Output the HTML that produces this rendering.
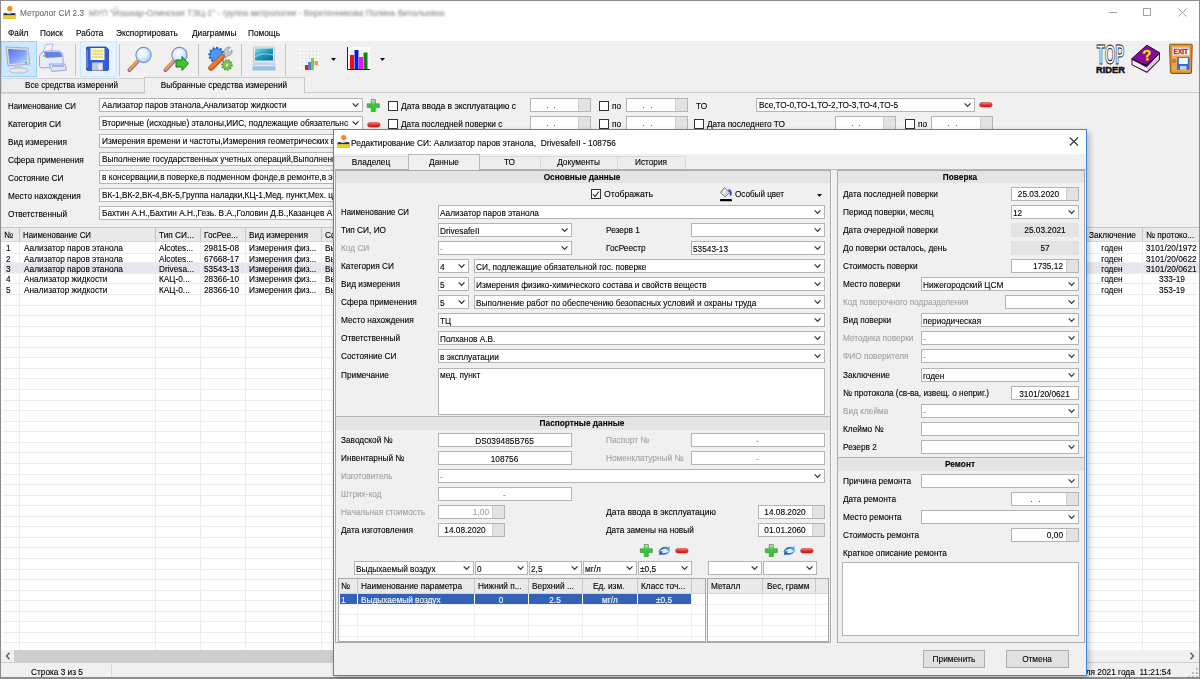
<!DOCTYPE html>
<html><head><meta charset="utf-8"><style>
html,body{margin:0;padding:0;}
body{width:1200px;height:679px;overflow:hidden;position:relative;background:#f0f0f0;font-family:"Liberation Sans",sans-serif;font-size:9px;color:#000;}
.a{position:absolute;}
.t{height:12px;line-height:12px;white-space:nowrap;-webkit-text-stroke-width:0.12px;filter:grayscale(1);}
svg{overflow:visible;}
</style></head><body>
<div class="a" style="left:0px;top:0px;width:1200px;height:41px;background:#fff;"></div>
<svg class="a" style="left:2px;top:4.5px" width="15" height="14" viewBox="0 0 15 14"><circle cx="7.8" cy="3.6" r="2.7" fill="#f0901a"/><path d="M4.5 9 Q5 5.8 7.8 6 Q10.6 5.8 11.2 9z" fill="#dfe4f4"/><path d="M1.5 8.6 L4 8 L6 9 L9 8.6 L11 8 L13.5 8.6 L13.5 10.2 L1.5 10.2z" fill="#1e2a58"/><rect x="1.6" y="10.2" width="12" height="3.4" fill="#f0d020" stroke="#c8a010" stroke-width="0.5"/></svg>
<div class="a t" style="top:6.80px;left:20px;transform-origin:0 50%;transform:scaleX(0.909);color:#707070;font-size:9px;">Метролог СИ 2.3</div>
<div class="a t" style="top:6.80px;left:89px;transform-origin:0 50%;transform:scaleX(0.92);color:#8a8a8a;font-size:9.2px;filter:blur(1.1px);">МУП "Йошкар-Олинская ТЭЦ-1" - группа метрологии - Веретенникова Полина Витальевна</div>
<div class="a" style="left:1109px;top:12px;width:8px;height:1px;background:#a0a0a0;"></div>
<div class="a" style="left:1143px;top:8px;width:8px;height:8px;box-sizing:border-box;border:1px solid #a0a0a0;"></div>
<svg class="a" style="left:1178px;top:8px" width="9" height="9" viewBox="0 0 9 9"><path d="M0.5 0.5 L8.5 8.5 M8.5 0.5 L0.5 8.5" stroke="#a0a0a0" stroke-width="1"/></svg>
<div class="a t" style="top:26.80px;left:8px;transform-origin:0 50%;transform:scaleX(0.92);">Файл</div>
<div class="a t" style="top:26.80px;left:40px;transform-origin:0 50%;transform:scaleX(0.92);">Поиск</div>
<div class="a t" style="top:26.80px;left:76px;transform-origin:0 50%;transform:scaleX(0.92);">Работа</div>
<div class="a t" style="top:26.80px;left:116px;transform-origin:0 50%;transform:scaleX(0.92);">Экспортировать</div>
<div class="a t" style="top:26.80px;left:192px;transform-origin:0 50%;transform:scaleX(0.92);">Диаграммы</div>
<div class="a t" style="top:26.80px;left:248px;transform-origin:0 50%;transform:scaleX(0.92);">Помощь</div>
<div class="a" style="left:1px;top:41px;width:36px;height:36px;background:#cce8ff;box-sizing:border-box;border:1px solid #99d1ff;"></div>
<div class="a" style="left:80px;top:41px;width:37px;height:36px;background:#e5f3ff;box-sizing:border-box;border:1px solid #cce8ff;"></div>
<div class="a" style="left:75px;top:44px;width:1px;height:32px;background:#c4c4c4;"></div>
<div class="a" style="left:119px;top:44px;width:1px;height:32px;background:#c4c4c4;"></div>
<div class="a" style="left:198px;top:44px;width:1px;height:32px;background:#c4c4c4;"></div>
<div class="a" style="left:241px;top:44px;width:1px;height:32px;background:#c4c4c4;"></div>
<div class="a" style="left:285px;top:44px;width:1px;height:32px;background:#c4c4c4;"></div>
<svg class="a" style="left:4px;top:45px" width="28" height="29" viewBox="0 0 28 29"><defs><linearGradient id="scr" x1="0" y1="0" x2="1" y2="1"><stop offset="0" stop-color="#5a6ee8"/><stop offset="0.6" stop-color="#8aa8f8"/><stop offset="1" stop-color="#c8e4ff"/></linearGradient></defs>
<path d="M2 2 L24 3 L26 19 L4 21z" fill="#d8dce8" stroke="#9aa0b4" stroke-width="0.8"/>
<path d="M4 4 L22.5 5 L24 17.5 L5.5 19z" fill="url(#scr)"/>
<rect x="21" y="17" width="2" height="1.5" fill="#3c3"/>
<path d="M11 21 L17 20.5 L18 24 L10 24.5z" fill="#c8ccd8"/>
<ellipse cx="14.5" cy="25.5" rx="9.5" ry="2.6" fill="#e4e6ee" stroke="#a8acbc" stroke-width="0.7"/></svg>
<svg class="a" style="left:38px;top:43px" width="30" height="31" viewBox="0 0 30 31"><path d="M5 9 L8 1.5 L15 1 L13 9z" fill="#f4f6ff" stroke="#98a0c8" stroke-width="0.7"/>
<path d="M1.5 14 Q2 8 10 8 L21 8 Q25 9 25 14 L25 24 L3 25 Q1.5 24 1.5 22z" fill="#e8ecff" stroke="#8890c0" stroke-width="0.8"/>
<path d="M6 9 L21 9 Q24 10 24 14 L8 15z" fill="#5f86e8"/>
<path d="M11 21 L27 21 L28.5 27 L14 28.5z" fill="#dfe6ff" stroke="#8a94c8" stroke-width="0.8"/>
<path d="M14 23 L26 23" stroke="#7b8ed8" stroke-width="1.2"/>
<circle cx="6" cy="13" r="0.9" fill="#4c4"/><circle cx="8.5" cy="13" r="0.9" fill="#e44"/></svg>
<svg class="a" style="left:85px;top:46px" width="25" height="26" viewBox="0 0 25 26"><path d="M1.5 2 Q1.5 1 2.5 1 L21 1 L23.5 3.5 L23.5 23 Q23.5 24.5 22 24.5 L3 24.5 Q1.5 24.5 1.5 23z" fill="#2f5fe0" stroke="#1e3ea8" stroke-width="0.8"/>
<rect x="5.5" y="2" width="14" height="12" fill="#fff7b8"/>
<path d="M7 5h11M7 8h11M7 11h11" stroke="#c9b870" stroke-width="0.8"/>
<rect x="7" y="16.5" width="11" height="8" fill="#c6cad8"/><rect x="13.5" y="17.5" width="3" height="6" fill="#eef0f6"/>
<path d="M2 4 L2 22" stroke="#7fa0ff" stroke-width="1"/></svg>
<svg class="a" style="left:127px;top:46px" width="27" height="27" viewBox="0 0 27 27"><defs><radialGradient id="lens" cx="0.4" cy="0.35" r="0.7"><stop offset="0" stop-color="#ffffff"/><stop offset="0.5" stop-color="#d8f0ff"/><stop offset="1" stop-color="#8cc8f0"/></radialGradient></defs>
<path d="M2.5 24 L10.5 15.5" stroke="#7a5a9a" stroke-width="4" stroke-linecap="round"/>
<path d="M2.5 23.5 L10.5 15" stroke="#f0a040" stroke-width="2.6" stroke-linecap="round"/>
<circle cx="16.5" cy="9" r="7.6" fill="url(#lens)" stroke="#8a84c8" stroke-width="1.1"/></svg>
<svg class="a" style="left:163px;top:46px" width="27" height="27" viewBox="0 0 27 27"><defs><radialGradient id="lens" cx="0.4" cy="0.35" r="0.7"><stop offset="0" stop-color="#ffffff"/><stop offset="0.5" stop-color="#d8f0ff"/><stop offset="1" stop-color="#8cc8f0"/></radialGradient></defs>
<path d="M2.5 24 L10.5 15.5" stroke="#7a5a9a" stroke-width="4" stroke-linecap="round"/>
<path d="M2.5 23.5 L10.5 15" stroke="#f0a040" stroke-width="2.6" stroke-linecap="round"/>
<circle cx="16.5" cy="9" r="7.6" fill="url(#lens)" stroke="#8a84c8" stroke-width="1.1"/><path d="M13 14 L19 14 L19 10.5 L25.5 17.5 L19 24.5 L19 21 L13 21z" fill="#40c030" stroke="#107a10" stroke-width="1"/></svg>
<svg class="a" style="left:207px;top:45px" width="27" height="27" viewBox="0 0 27 27"><circle cx="9.5" cy="10" r="7" fill="#3c8ee8" stroke="#2266c8" stroke-width="2.4" stroke-dasharray="2 1.6"/>
<circle cx="9.5" cy="10" r="5.5" fill="#4a9af0"/>
<path d="M17 6 Q19 1 23.5 2.5 L20.5 5.5 L22 7.5 L25 5 Q26 9.5 21 11 L18 13z" fill="#c8c8d0" stroke="#888" stroke-width="0.7"/>
<circle cx="20" cy="20" r="4.8" fill="#7cc050" stroke="#5a9a30" stroke-width="2" stroke-dasharray="1.6 1.3"/>
<circle cx="20" cy="20" r="1.5" fill="#d8f0c8"/>
<path d="M4 23 L15 12" stroke="#b04a10" stroke-width="5.4" stroke-linecap="round"/>
<path d="M4 22.5 L15 11.5" stroke="#f07828" stroke-width="3.8" stroke-linecap="round"/></svg>
<svg class="a" style="left:252px;top:46px" width="25" height="26" viewBox="0 0 25 26"><defs><linearGradient id="tl" x1="0" y1="0" x2="1" y2="1"><stop offset="0" stop-color="#80e0f0"/><stop offset="0.5" stop-color="#1a9ab8"/><stop offset="1" stop-color="#0a6a90"/></linearGradient></defs>
<rect x="1.5" y="1" width="21" height="16" rx="1" fill="#e8eaf4" stroke="#b8bcd4" stroke-width="0.8"/>
<rect x="3" y="2.5" width="18" height="12" fill="url(#tl)"/>
<path d="M3 11 Q10 6 21 9" stroke="#b8f0ff" stroke-width="1" fill="none" opacity="0.7"/>
<rect x="1" y="18" width="22" height="2.5" fill="#d4e4f4" stroke="#9ab0cc" stroke-width="0.5"/>
<rect x="1" y="21.5" width="22" height="2.5" fill="#8ad0e8" stroke="#6aa0c0" stroke-width="0.5"/></svg>
<svg class="a" style="left:298px;top:47px" width="23" height="25" viewBox="0 0 23 25"><rect x="1" y="1" width="20" height="22" fill="#f8f8f8"/>
<path d="M1 4.5h20M1 8h20M1 11.5h20M1 15h20M1 18.5h20M4.5 1v22M8 1v22M11.5 1v22M15 1v22M18.5 1v22" stroke="#dedede" stroke-width="0.6"/>
<rect x="7" y="18" width="3" height="5" fill="#e02020"/><rect x="10" y="15" width="3" height="8" fill="#5080d0"/>
<rect x="13" y="11" width="3" height="12" fill="#70d040"/><rect x="16.5" y="14" width="3.5" height="4" fill="#f0a040"/></svg>
<svg class="a" style="left:331px;top:58px" width="5" height="3" viewBox="0 0 5 3"><path d="M0 0 L5 0 L2.5 3z" fill="#111"/></svg>
<svg class="a" style="left:345px;top:46px" width="26" height="26" viewBox="0 0 26 26"><rect x="2" y="1" width="23" height="22" fill="#fff"/>
<path d="M2 5h23M2 9h23M2 13h23M2 17h23M7 1v22M12 1v22M17 1v22M22 1v22" stroke="#e4e4e4" stroke-width="0.6"/>
<path d="M2.5 1 L2.5 23.5 L25 23.5" stroke="#222" stroke-width="1" fill="none"/>
<rect x="5" y="9" width="4" height="14" fill="#f01010"/><rect x="9.5" y="4" width="4" height="19" fill="#1010f0"/>
<rect x="14" y="11" width="4" height="12" fill="#f010f0"/><rect x="18.5" y="6.5" width="4" height="16.5" fill="#108010"/></svg>
<svg class="a" style="left:380px;top:58px" width="5" height="3" viewBox="0 0 5 3"><path d="M0 0 L5 0 L2.5 3z" fill="#111"/></svg>
<svg class="a" style="left:1095px;top:43px" width="32" height="32" viewBox="0 0 32 32"><text x="1.8" y="21" font-family="Liberation Sans" font-weight="bold" font-size="27" fill="#fff" stroke="#111" stroke-width="1" textLength="27.5" lengthAdjust="spacingAndGlyphs">TOP</text>
<text x="1" y="29.6" font-family="Liberation Sans" font-weight="bold" font-size="9.4" fill="#111" stroke="#111" stroke-width="0.5" textLength="29" lengthAdjust="spacingAndGlyphs">RIDER</text></svg>
<svg class="a" style="left:1130px;top:44px" width="32" height="30" viewBox="0 0 32 30"><path d="M1.5 15 L1.5 21 L17 29 L30 16 L30 9z" fill="#3a0a48"/>
<path d="M2.5 16 L16.5 23.5 L29 10.5 L29 15.5 L16.8 27.5 L2.5 20.5z" fill="#f4f4f4"/>
<path d="M17 24 L29 12 L29 15.5 L16.8 27.5z" fill="#cfcfcf"/>
<path d="M1.5 15 L16.8 1.2 L30 9 L16.5 21z" fill="#8a0a9a" stroke="#2a0038" stroke-width="1"/>
<text x="17" y="16.5" text-anchor="middle" font-family="Liberation Sans" font-weight="bold" font-size="15" fill="#f8f000" stroke="#c8c000" stroke-width="0.3" transform="rotate(-8 16 11)">?</text></svg>
<svg class="a" style="left:1168px;top:43px" width="26" height="32" viewBox="0 0 26 32"><path d="M1.5 2.5 Q1.5 1.2 3 1.2 L23 1.2 Q24.5 1.2 24.2 2.5 L23.5 29 Q23.5 30.5 22 30.5 L4 30.5 Q2.5 30.5 2.5 29z" fill="#d89038" stroke="#905010" stroke-width="1"/>
<rect x="4" y="3" width="18" height="25.5" fill="#eaa84c"/>
<path d="M4.5 4.5 L20 4.5 L21.5 6 L21.5 12.5 L4.5 12.5z" fill="#e8f4ff" stroke="#a8c0d0" stroke-width="0.4"/>
<text x="12.8" y="11.3" text-anchor="middle" font-family="Liberation Sans" font-weight="bold" font-size="6.8" fill="#e01818" stroke="#e01818" stroke-width="0.35" textLength="14.5" lengthAdjust="spacingAndGlyphs">EXIT</text>
<rect x="9" y="14.3" width="12.5" height="12.5" fill="#2f6ee0"/><rect x="10.8" y="15" width="9" height="6" fill="#f4f8ff"/><rect x="12" y="23" width="6.5" height="3.8" fill="#c8d0e0"/>
<circle cx="6" cy="18" r="1.8" fill="#d08838" stroke="#8a5010" stroke-width="0.5"/></svg>
<div class="a" style="left:1px;top:78px;width:144px;height:16px;background:#ececec;box-sizing:border-box;border:1px solid #d4d4d4;"></div>
<div class="a" style="left:1px;top:92px;width:1198px;height:1px;background:#c9c9c9;"></div>
<div class="a" style="left:144px;top:77px;width:161px;height:16px;background:#f0f0f0;box-sizing:border-box;border:1px solid #c9c9c9;border-bottom:none;"></div>
<div class="a t" style="top:78.90px;left:0.00px;width:143px;text-align:center;transform:scaleX(0.896);">Все средства измерений</div>
<div class="a t" style="top:78.90px;left:144.00px;width:160px;text-align:center;transform:scaleX(0.92);">Выбранные средства измерений</div>
<div class="a t" style="top:99.80px;left:8px;transform-origin:0 50%;transform:scaleX(0.873);">Наименование СИ</div>
<div class="a" style="left:99px;top:98px;width:264px;height:14px;background:#fff;box-sizing:border-box;border:1px solid #b4b4b4;"></div>
<div class="a t" style="top:99.10px;left:102px;transform-origin:0 50%;transform:scaleX(0.92);width:267.4px;overflow:hidden;">Аализатор паров этанола,Анализатор жидкости</div>
<svg class="a" style="left:351px;top:98px" width="11" height="14"><path d="M1.7 5.40 L4.6 8.40 L7.5 5.40" fill="none" stroke="#333" stroke-width="1.25"/></svg>
<div class="a t" style="top:117.80px;left:8px;transform-origin:0 50%;transform:scaleX(0.92);">Категория СИ</div>
<div class="a" style="left:99px;top:116px;width:264px;height:14px;background:#fff;box-sizing:border-box;border:1px solid #b4b4b4;"></div>
<div class="a t" style="top:117.10px;left:102px;transform-origin:0 50%;transform:scaleX(0.92);width:267.4px;overflow:hidden;">Вторичные (исходные) эталоны,ИИС, подлежащие обязательной гос. поверке</div>
<svg class="a" style="left:351px;top:116px" width="11" height="14"><path d="M1.7 5.40 L4.6 8.40 L7.5 5.40" fill="none" stroke="#333" stroke-width="1.25"/></svg>
<div class="a t" style="top:135.80px;left:8px;transform-origin:0 50%;transform:scaleX(0.92);">Вид измерения</div>
<div class="a" style="left:99px;top:134px;width:264px;height:14px;background:#fff;box-sizing:border-box;border:1px solid #b4b4b4;"></div>
<div class="a t" style="top:135.10px;left:102px;transform-origin:0 50%;transform:scaleX(0.92);width:267.4px;overflow:hidden;">Измерения времени и частоты,Измерения геометрических величин</div>
<svg class="a" style="left:351px;top:134px" width="11" height="14"><path d="M1.7 5.40 L4.6 8.40 L7.5 5.40" fill="none" stroke="#333" stroke-width="1.25"/></svg>
<div class="a t" style="top:153.80px;left:8px;transform-origin:0 50%;transform:scaleX(0.92);">Сфера применения</div>
<div class="a" style="left:99px;top:152px;width:264px;height:14px;background:#fff;box-sizing:border-box;border:1px solid #b4b4b4;"></div>
<div class="a t" style="top:153.10px;left:102px;transform-origin:0 50%;transform:scaleX(0.92);width:267.4px;overflow:hidden;">Выполнение государственных учетных операций,Выполнение работ</div>
<svg class="a" style="left:351px;top:152px" width="11" height="14"><path d="M1.7 5.40 L4.6 8.40 L7.5 5.40" fill="none" stroke="#333" stroke-width="1.25"/></svg>
<div class="a t" style="top:171.80px;left:8px;transform-origin:0 50%;transform:scaleX(0.92);">Состояние СИ</div>
<div class="a" style="left:99px;top:170px;width:264px;height:14px;background:#fff;box-sizing:border-box;border:1px solid #b4b4b4;"></div>
<div class="a t" style="top:171.10px;left:102px;transform-origin:0 50%;transform:scaleX(0.92);width:267.4px;overflow:hidden;">в консервации,в поверке,в подменном фонде,в ремонте,в эксплуатации</div>
<svg class="a" style="left:351px;top:170px" width="11" height="14"><path d="M1.7 5.40 L4.6 8.40 L7.5 5.40" fill="none" stroke="#333" stroke-width="1.25"/></svg>
<div class="a t" style="top:189.80px;left:8px;transform-origin:0 50%;transform:scaleX(0.92);">Место нахождения</div>
<div class="a" style="left:99px;top:188px;width:264px;height:14px;background:#fff;box-sizing:border-box;border:1px solid #b4b4b4;"></div>
<div class="a t" style="top:189.10px;left:102px;transform-origin:0 50%;transform:scaleX(0.92);width:267.4px;overflow:hidden;">ВК-1,ВК-2,ВК-4,ВК-5,Группа наладки,КЦ-1,Мед. пункт,Мех. цех</div>
<svg class="a" style="left:351px;top:188px" width="11" height="14"><path d="M1.7 5.40 L4.6 8.40 L7.5 5.40" fill="none" stroke="#333" stroke-width="1.25"/></svg>
<div class="a t" style="top:207.80px;left:8px;transform-origin:0 50%;transform:scaleX(0.92);">Ответственный</div>
<div class="a" style="left:99px;top:206px;width:264px;height:14px;background:#fff;box-sizing:border-box;border:1px solid #b4b4b4;"></div>
<div class="a t" style="top:207.10px;left:102px;transform-origin:0 50%;transform:scaleX(0.92);width:267.4px;overflow:hidden;">Бахтин А.Н.,Бахтин А.Н.,Гезь. В.А.,Головин Д.В.,Казанцев А.А.</div>
<svg class="a" style="left:351px;top:206px" width="11" height="14"><path d="M1.7 5.40 L4.6 8.40 L7.5 5.40" fill="none" stroke="#333" stroke-width="1.25"/></svg>
<svg class="a" style="left:367px;top:99px" width="13" height="13" viewBox="0 0 13 13"><defs><linearGradient id="pg" x1="0" y1="0" x2="0" y2="1"><stop offset="0" stop-color="#d8ecd8"/><stop offset="0.45" stop-color="#40c040"/><stop offset="1" stop-color="#10e010"/></linearGradient></defs><path d="M4.3 0.5h4v4.3h4v3.8h-4v4h-4v-4h-4v-3.8h4z" fill="url(#pg)" stroke="#3a8a3a" stroke-width="0.7"/></svg>
<svg class="a" style="left:367px;top:122px" width="14" height="6" viewBox="0 0 14 6"><defs><linearGradient id="mg" x1="0" y1="0" x2="0" y2="1"><stop offset="0" stop-color="#e8a0a0"/><stop offset="0.5" stop-color="#e02a2a"/><stop offset="1" stop-color="#e81010"/></linearGradient></defs><rect x="0.6" y="0.6" width="12.5" height="4.4" rx="2.2" fill="url(#mg)" stroke="#c02020" stroke-width="0.6"/></svg>
<div class="a" style="left:388px;top:101px;width:10px;height:10px;background:#fff;box-sizing:border-box;border:1px solid #333;"></div>
<div class="a t" style="top:99.70px;left:401px;transform-origin:0 50%;transform:scaleX(0.941);">Дата ввода в эксплуатацию с</div>
<div class="a" style="left:530px;top:98px;width:61px;height:14px;background:#fff;box-sizing:border-box;border:1px solid #b4b4b4;"></div>
<div class="a" style="left:578px;top:99px;width:12px;height:12px;background:#e2e2e2;"></div>
<div class="a" style="left:578px;top:99px;width:1px;height:12px;background:#cfcfcf;"></div>
<div class="a" style="left:546.8px;top:107px;width:1.2px;height:1.2px;background:#606060"></div>
<div class="a" style="left:554.2px;top:107px;width:1.2px;height:1.2px;background:#606060"></div>
<div class="a" style="left:599px;top:101px;width:10px;height:10px;background:#fff;box-sizing:border-box;border:1px solid #333;"></div>
<div class="a t" style="top:99.70px;left:612px;transform-origin:0 50%;transform:scaleX(0.92);">по</div>
<div class="a" style="left:626px;top:98px;width:62px;height:14px;background:#fff;box-sizing:border-box;border:1px solid #b4b4b4;"></div>
<div class="a" style="left:675px;top:99px;width:12px;height:12px;background:#e2e2e2;"></div>
<div class="a" style="left:675px;top:99px;width:1px;height:12px;background:#cfcfcf;"></div>
<div class="a" style="left:643.2px;top:107px;width:1.2px;height:1.2px;background:#606060"></div>
<div class="a" style="left:650.8px;top:107px;width:1.2px;height:1.2px;background:#606060"></div>
<div class="a" style="left:388px;top:119px;width:10px;height:10px;background:#fff;box-sizing:border-box;border:1px solid #333;"></div>
<div class="a t" style="top:117.70px;left:401px;transform-origin:0 50%;transform:scaleX(0.92);">Дата последней поверки с</div>
<div class="a" style="left:530px;top:116px;width:61px;height:14px;background:#fff;box-sizing:border-box;border:1px solid #b4b4b4;"></div>
<div class="a" style="left:578px;top:117px;width:12px;height:12px;background:#e2e2e2;"></div>
<div class="a" style="left:578px;top:117px;width:1px;height:12px;background:#cfcfcf;"></div>
<div class="a" style="left:546.8px;top:125px;width:1.2px;height:1.2px;background:#606060"></div>
<div class="a" style="left:554.2px;top:125px;width:1.2px;height:1.2px;background:#606060"></div>
<div class="a" style="left:599px;top:119px;width:10px;height:10px;background:#fff;box-sizing:border-box;border:1px solid #333;"></div>
<div class="a t" style="top:117.70px;left:612px;transform-origin:0 50%;transform:scaleX(0.92);">по</div>
<div class="a" style="left:626px;top:116px;width:62px;height:14px;background:#fff;box-sizing:border-box;border:1px solid #b4b4b4;"></div>
<div class="a" style="left:675px;top:117px;width:12px;height:12px;background:#e2e2e2;"></div>
<div class="a" style="left:675px;top:117px;width:1px;height:12px;background:#cfcfcf;"></div>
<div class="a" style="left:643.2px;top:125px;width:1.2px;height:1.2px;background:#606060"></div>
<div class="a" style="left:650.8px;top:125px;width:1.2px;height:1.2px;background:#606060"></div>
<div class="a t" style="top:99.70px;left:696px;transform-origin:0 50%;transform:scaleX(0.92);">ТО</div>
<div class="a" style="left:756px;top:98px;width:219px;height:14px;background:#fff;box-sizing:border-box;border:1px solid #b4b4b4;"></div>
<div class="a t" style="top:99.10px;left:759px;transform-origin:0 50%;transform:scaleX(0.92);width:218.5px;overflow:hidden;">Все,ТО-0,ТО-1,ТО-2,ТО-3,ТО-4,ТО-5</div>
<svg class="a" style="left:963px;top:98px" width="11" height="14"><path d="M1.7 5.40 L4.6 8.40 L7.5 5.40" fill="none" stroke="#333" stroke-width="1.25"/></svg>
<svg class="a" style="left:979px;top:102px" width="14" height="6" viewBox="0 0 14 6"><defs><linearGradient id="mg" x1="0" y1="0" x2="0" y2="1"><stop offset="0" stop-color="#e8a0a0"/><stop offset="0.5" stop-color="#e02a2a"/><stop offset="1" stop-color="#e81010"/></linearGradient></defs><rect x="0.6" y="0.6" width="12.5" height="4.4" rx="2.2" fill="url(#mg)" stroke="#c02020" stroke-width="0.6"/></svg>
<div class="a" style="left:694px;top:119px;width:10px;height:10px;background:#fff;box-sizing:border-box;border:1px solid #333;"></div>
<div class="a t" style="top:117.70px;left:707px;transform-origin:0 50%;transform:scaleX(0.92);">Дата последнего ТО</div>
<div class="a" style="left:835px;top:116px;width:61px;height:14px;background:#fff;box-sizing:border-box;border:1px solid #b4b4b4;"></div>
<div class="a" style="left:883px;top:117px;width:12px;height:12px;background:#e2e2e2;"></div>
<div class="a" style="left:883px;top:117px;width:1px;height:12px;background:#cfcfcf;"></div>
<div class="a" style="left:851.8px;top:125px;width:1.2px;height:1.2px;background:#606060"></div>
<div class="a" style="left:859.2px;top:125px;width:1.2px;height:1.2px;background:#606060"></div>
<div class="a" style="left:905px;top:119px;width:10px;height:10px;background:#fff;box-sizing:border-box;border:1px solid #333;"></div>
<div class="a t" style="top:117.70px;left:918px;transform-origin:0 50%;transform:scaleX(0.92);">по</div>
<div class="a" style="left:931px;top:116px;width:62px;height:14px;background:#fff;box-sizing:border-box;border:1px solid #b4b4b4;"></div>
<div class="a" style="left:980px;top:117px;width:12px;height:12px;background:#e2e2e2;"></div>
<div class="a" style="left:980px;top:117px;width:1px;height:12px;background:#cfcfcf;"></div>
<div class="a" style="left:948.2px;top:125px;width:1.2px;height:1.2px;background:#606060"></div>
<div class="a" style="left:955.8px;top:125px;width:1.2px;height:1.2px;background:#606060"></div>
<div class="a" style="left:1px;top:227px;width:1198px;height:423px;background:#fff;"></div>
<div class="a" style="left:1px;top:227px;width:1198px;height:15px;background:#e9e9e9;"></div>
<div class="a" style="left:1px;top:227px;width:1198px;height:1px;background:#c8c8c8;"></div>
<div class="a" style="left:1px;top:241px;width:1198px;height:1px;background:#d8d8d8;"></div>
<div class="a" style="left:19px;top:228px;width:1px;height:13px;background:#c6c6c6;"></div>
<div class="a" style="left:155px;top:228px;width:1px;height:13px;background:#c6c6c6;"></div>
<div class="a" style="left:200px;top:228px;width:1px;height:13px;background:#c6c6c6;"></div>
<div class="a" style="left:245px;top:228px;width:1px;height:13px;background:#c6c6c6;"></div>
<div class="a" style="left:321px;top:228px;width:1px;height:13px;background:#c6c6c6;"></div>
<div class="a" style="left:1142px;top:228px;width:1px;height:13px;background:#c6c6c6;"></div>
<div class="a" style="left:4px;top:263px;width:1195px;height:11px;background:#e6e6ec"></div>
<div class="a" style="left:2px;top:253px;width:1196px;height:1px;background:#ededed"></div>
<div class="a" style="left:2px;top:262px;width:1196px;height:1px;background:#ededed"></div>
<div class="a" style="left:2px;top:273px;width:1196px;height:1px;background:#ededed"></div>
<div class="a" style="left:2px;top:283px;width:1196px;height:1px;background:#ededed"></div>
<div class="a" style="left:2px;top:294px;width:1196px;height:1px;background:#ededed"></div>
<div class="a" style="left:2px;top:305px;width:1196px;height:1px;background:#ededed"></div>
<div class="a" style="left:2px;top:315px;width:1196px;height:1px;background:#ededed"></div>
<div class="a" style="left:2px;top:326px;width:1196px;height:1px;background:#ededed"></div>
<div class="a" style="left:2px;top:336px;width:1196px;height:1px;background:#ededed"></div>
<div class="a" style="left:2px;top:347px;width:1196px;height:1px;background:#ededed"></div>
<div class="a" style="left:2px;top:357px;width:1196px;height:1px;background:#ededed"></div>
<div class="a" style="left:2px;top:368px;width:1196px;height:1px;background:#ededed"></div>
<div class="a" style="left:2px;top:378px;width:1196px;height:1px;background:#ededed"></div>
<div class="a" style="left:2px;top:389px;width:1196px;height:1px;background:#ededed"></div>
<div class="a" style="left:2px;top:400px;width:1196px;height:1px;background:#ededed"></div>
<div class="a" style="left:2px;top:410px;width:1196px;height:1px;background:#ededed"></div>
<div class="a" style="left:2px;top:421px;width:1196px;height:1px;background:#ededed"></div>
<div class="a" style="left:2px;top:431px;width:1196px;height:1px;background:#ededed"></div>
<div class="a" style="left:2px;top:442px;width:1196px;height:1px;background:#ededed"></div>
<div class="a" style="left:2px;top:452px;width:1196px;height:1px;background:#ededed"></div>
<div class="a" style="left:2px;top:463px;width:1196px;height:1px;background:#ededed"></div>
<div class="a" style="left:2px;top:474px;width:1196px;height:1px;background:#ededed"></div>
<div class="a" style="left:2px;top:484px;width:1196px;height:1px;background:#ededed"></div>
<div class="a" style="left:2px;top:495px;width:1196px;height:1px;background:#ededed"></div>
<div class="a" style="left:2px;top:505px;width:1196px;height:1px;background:#ededed"></div>
<div class="a" style="left:2px;top:516px;width:1196px;height:1px;background:#ededed"></div>
<div class="a" style="left:2px;top:526px;width:1196px;height:1px;background:#ededed"></div>
<div class="a" style="left:2px;top:537px;width:1196px;height:1px;background:#ededed"></div>
<div class="a" style="left:2px;top:547px;width:1196px;height:1px;background:#ededed"></div>
<div class="a" style="left:2px;top:558px;width:1196px;height:1px;background:#ededed"></div>
<div class="a" style="left:2px;top:569px;width:1196px;height:1px;background:#ededed"></div>
<div class="a" style="left:2px;top:579px;width:1196px;height:1px;background:#ededed"></div>
<div class="a" style="left:2px;top:590px;width:1196px;height:1px;background:#ededed"></div>
<div class="a" style="left:2px;top:600px;width:1196px;height:1px;background:#ededed"></div>
<div class="a" style="left:2px;top:611px;width:1196px;height:1px;background:#ededed"></div>
<div class="a" style="left:2px;top:621px;width:1196px;height:1px;background:#ededed"></div>
<div class="a" style="left:2px;top:632px;width:1196px;height:1px;background:#ededed"></div>
<div class="a" style="left:2px;top:642px;width:1196px;height:1px;background:#ededed"></div>
<div class="a" style="left:19px;top:242px;width:1px;height:408px;background:#ededed;"></div>
<div class="a" style="left:155px;top:242px;width:1px;height:408px;background:#ededed;"></div>
<div class="a" style="left:200px;top:242px;width:1px;height:408px;background:#ededed;"></div>
<div class="a" style="left:245px;top:242px;width:1px;height:408px;background:#ededed;"></div>
<div class="a" style="left:321px;top:242px;width:1px;height:408px;background:#ededed;"></div>
<div class="a" style="left:1142px;top:242px;width:1px;height:408px;background:#ededed;"></div>
<div class="a t" style="top:229.10px;left:4px;transform-origin:0 50%;transform:scaleX(0.92);">№</div>
<div class="a t" style="top:229.10px;left:23px;transform-origin:0 50%;transform:scaleX(0.873);">Наименование СИ</div>
<div class="a t" style="top:229.10px;left:159px;transform-origin:0 50%;transform:scaleX(0.92);">Тип СИ...</div>
<div class="a t" style="top:229.10px;left:204px;transform-origin:0 50%;transform:scaleX(0.92);">ГосРее...</div>
<div class="a t" style="top:229.10px;left:249px;transform-origin:0 50%;transform:scaleX(0.92);">Вид измерения</div>
<div class="a t" style="top:229.10px;left:325px;transform-origin:0 50%;transform:scaleX(0.92);">Сфера</div>
<div class="a t" style="top:229.10px;left:1089px;transform-origin:0 50%;transform:scaleX(0.92);">Заключение</div>
<div class="a t" style="top:229.10px;left:1146px;transform-origin:0 50%;transform:scaleX(0.92);">№ протоко...</div>
<div class="a t" style="top:242.35px;left:6px;transform-origin:0 50%;transform:scaleX(0.92);">1</div>
<div class="a t" style="top:242.35px;left:24px;transform-origin:0 50%;transform:scaleX(0.92);">Аализатор паров этанола</div>
<div class="a t" style="top:242.35px;left:159px;transform-origin:0 50%;transform:scaleX(0.92);">Alcotes...</div>
<div class="a t" style="top:242.35px;left:204px;transform-origin:0 50%;transform:scaleX(0.92);">29815-08</div>
<div class="a t" style="top:242.35px;left:249px;transform-origin:0 50%;transform:scaleX(0.92);">Измерения физ...</div>
<div class="a t" style="top:242.35px;left:325px;transform-origin:0 50%;transform:scaleX(0.92);">Вы</div>
<div class="a t" style="top:242.35px;left:1087.00px;width:50px;text-align:center;transform:scaleX(0.92);">годен</div>
<div class="a t" style="top:242.35px;left:1146px;transform-origin:0 50%;transform:scaleX(0.92);">3101/20/1972</div>
<div class="a t" style="top:252.70px;left:6px;transform-origin:0 50%;transform:scaleX(0.92);">2</div>
<div class="a t" style="top:252.70px;left:24px;transform-origin:0 50%;transform:scaleX(0.92);">Аализатор паров этанола</div>
<div class="a t" style="top:252.70px;left:159px;transform-origin:0 50%;transform:scaleX(0.92);">Alcotes...</div>
<div class="a t" style="top:252.70px;left:204px;transform-origin:0 50%;transform:scaleX(0.92);">67668-17</div>
<div class="a t" style="top:252.70px;left:249px;transform-origin:0 50%;transform:scaleX(0.92);">Измерения физ...</div>
<div class="a t" style="top:252.70px;left:325px;transform-origin:0 50%;transform:scaleX(0.92);">Вы</div>
<div class="a t" style="top:252.70px;left:1087.00px;width:50px;text-align:center;transform:scaleX(0.92);">годен</div>
<div class="a t" style="top:252.70px;left:1146px;transform-origin:0 50%;transform:scaleX(0.92);">3101/20/0622</div>
<div class="a t" style="top:262.75px;left:6px;transform-origin:0 50%;transform:scaleX(0.92);">3</div>
<div class="a t" style="top:262.75px;left:24px;transform-origin:0 50%;transform:scaleX(0.92);">Аализатор паров этанола</div>
<div class="a t" style="top:262.75px;left:159px;transform-origin:0 50%;transform:scaleX(0.92);">Drivesa...</div>
<div class="a t" style="top:262.75px;left:204px;transform-origin:0 50%;transform:scaleX(0.92);">53543-13</div>
<div class="a t" style="top:262.75px;left:249px;transform-origin:0 50%;transform:scaleX(0.92);">Измерения физ...</div>
<div class="a t" style="top:262.75px;left:325px;transform-origin:0 50%;transform:scaleX(0.92);">Вы</div>
<div class="a t" style="top:262.75px;left:1087.00px;width:50px;text-align:center;transform:scaleX(0.92);">годен</div>
<div class="a t" style="top:262.75px;left:1146px;transform-origin:0 50%;transform:scaleX(0.92);">3101/20/0621</div>
<div class="a t" style="top:273.20px;left:6px;transform-origin:0 50%;transform:scaleX(0.92);">4</div>
<div class="a t" style="top:273.20px;left:24px;transform-origin:0 50%;transform:scaleX(0.92);">Анализатор жидкости</div>
<div class="a t" style="top:273.20px;left:159px;transform-origin:0 50%;transform:scaleX(0.92);">КАЦ-0...</div>
<div class="a t" style="top:273.20px;left:204px;transform-origin:0 50%;transform:scaleX(0.92);">28366-10</div>
<div class="a t" style="top:273.20px;left:249px;transform-origin:0 50%;transform:scaleX(0.92);">Измерения физ...</div>
<div class="a t" style="top:273.20px;left:325px;transform-origin:0 50%;transform:scaleX(0.92);">Вы</div>
<div class="a t" style="top:273.20px;left:1087.00px;width:50px;text-align:center;transform:scaleX(0.92);">годен</div>
<div class="a t" style="top:273.20px;left:1147.00px;width:50px;text-align:center;transform:scaleX(0.92);">333-19</div>
<div class="a t" style="top:283.85px;left:6px;transform-origin:0 50%;transform:scaleX(0.92);">5</div>
<div class="a t" style="top:283.85px;left:24px;transform-origin:0 50%;transform:scaleX(0.92);">Анализатор жидкости</div>
<div class="a t" style="top:283.85px;left:159px;transform-origin:0 50%;transform:scaleX(0.92);">КАЦ-0...</div>
<div class="a t" style="top:283.85px;left:204px;transform-origin:0 50%;transform:scaleX(0.92);">28366-10</div>
<div class="a t" style="top:283.85px;left:249px;transform-origin:0 50%;transform:scaleX(0.92);">Измерения физ...</div>
<div class="a t" style="top:283.85px;left:325px;transform-origin:0 50%;transform:scaleX(0.92);">Вы</div>
<div class="a t" style="top:283.85px;left:1087.00px;width:50px;text-align:center;transform:scaleX(0.92);">годен</div>
<div class="a t" style="top:283.85px;left:1147.00px;width:50px;text-align:center;transform:scaleX(0.92);">353-19</div>
<div class="a" style="left:1px;top:650px;width:1198px;height:12px;background:#f0f0f0;"></div>
<div class="a" style="left:14px;top:650px;width:687px;height:12px;background:#cdcdcd;"></div>
<svg class="a" style="left:5px;top:652px" width="6" height="8" viewBox="0 0 6 8"><path d="M4.5 0.8 L1.5 4 L4.5 7.2" fill="none" stroke="#555" stroke-width="1.3"/></svg>
<svg class="a" style="left:1189px;top:652px" width="6" height="8" viewBox="0 0 6 8"><path d="M1.5 0.8 L4.5 4 L1.5 7.2" fill="none" stroke="#555" stroke-width="1.3"/></svg>
<div class="a" style="left:1px;top:662px;width:1198px;height:1px;background:#cdcdcd;"></div>
<div class="a t" style="top:665.60px;left:31px;transform-origin:0 50%;transform:scaleX(0.92);">Строка 3 из 5</div>
<div class="a" style="left:111px;top:664px;width:1px;height:13px;background:#d8d8d8;"></div>
<div class="a" style="left:1087px;top:663px;width:100px;height:14px;overflow:hidden">
<div class="a t" style="top:2.60px;left:-216.00px;width:300px;text-align:right;transform-origin:100% 50%;transform:scaleX(0.92);">Пятница, 19 февраля 2021 года&nbsp;&nbsp;11:21:54</div>
</div>
<div class="a" style="left:1196px;top:668px;width:2px;height:2px;background:#b8b8b8;"></div>
<div class="a" style="left:1192px;top:672px;width:2px;height:2px;background:#b8b8b8;"></div>
<div class="a" style="left:1196px;top:672px;width:2px;height:2px;background:#b8b8b8;"></div>
<div class="a" style="left:1188px;top:676px;width:2px;height:2px;background:#b8b8b8;"></div>
<div class="a" style="left:1192px;top:676px;width:2px;height:2px;background:#b8b8b8;"></div>
<div class="a" style="left:1196px;top:676px;width:2px;height:2px;background:#b8b8b8;"></div>
<div class="a" style="left:0px;top:0px;width:1200px;height:679px;box-sizing:border-box;border:1px solid #8c8c8c;"></div>
<div class="a" style="left:0px;top:677px;width:1200px;height:1px;background:#8c8c8c;"></div>
<div class="a" style="left:333px;top:129px;width:754px;height:547px;background:#f0f0f0;box-sizing:border-box;border:1px solid #3b8bd8;box-shadow:2px 3px 6px rgba(0,0,0,0.28);"></div>
<div class="a" style="left:334px;top:130px;width:752px;height:24px;background:#fff;"></div>
<svg class="a" style="left:336px;top:133.5px" width="15" height="14" viewBox="0 0 15 14"><circle cx="7.8" cy="3.6" r="2.7" fill="#f0901a"/><path d="M4.5 9 Q5 5.8 7.8 6 Q10.6 5.8 11.2 9z" fill="#dfe4f4"/><path d="M1.5 8.6 L4 8 L6 9 L9 8.6 L11 8 L13.5 8.6 L13.5 10.2 L1.5 10.2z" fill="#1e2a58"/><rect x="1.6" y="10.2" width="12" height="3.4" fill="#f0d020" stroke="#c8a010" stroke-width="0.5"/></svg>
<div class="a t" style="top:136.60px;left:351px;transform-origin:0 50%;transform:scaleX(0.92);font-size:9.1px;">Редактирование СИ: Аализатор паров этанола,&nbsp; DrivesafeII - 108756</div>
<svg class="a" style="left:1069px;top:137px" width="10" height="9" viewBox="0 0 10 9"><path d="M0.8 0.5 L9 8.5 M9 0.5 L0.8 8.5" stroke="#333" stroke-width="1.1"/></svg>
<div class="a" style="left:334px;top:156px;width:75px;height:15px;background:#ededed;box-sizing:border-box;border:1px solid #d9d9d9;"></div>
<div class="a t" style="top:156.40px;left:334.00px;width:74px;text-align:center;transform:scaleX(0.92);">Владелец</div>
<div class="a" style="left:479px;top:156px;width:62px;height:15px;background:#ededed;box-sizing:border-box;border:1px solid #d9d9d9;"></div>
<div class="a t" style="top:156.40px;left:479.00px;width:61px;text-align:center;transform:scaleX(0.92);">ТО</div>
<div class="a" style="left:540px;top:156px;width:78px;height:15px;background:#ededed;box-sizing:border-box;border:1px solid #d9d9d9;"></div>
<div class="a t" style="top:156.40px;left:540.00px;width:77px;text-align:center;transform:scaleX(0.92);">Документы</div>
<div class="a" style="left:617px;top:156px;width:69px;height:15px;background:#ededed;box-sizing:border-box;border:1px solid #d9d9d9;"></div>
<div class="a t" style="top:156.40px;left:617.00px;width:68px;text-align:center;transform:scaleX(0.92);">История</div>
<div class="a" style="left:334px;top:169px;width:752px;height:1px;background:#b4b4bc;"></div>
<div class="a" style="left:408px;top:154px;width:72px;height:17px;background:#f0f0f0;box-sizing:border-box;border:1px solid #b9b9c0;border-bottom:none;"></div>
<div class="a t" style="top:155.60px;left:408.50px;width:70px;text-align:center;transform:scaleX(0.92);">Данные</div>
<div class="a" style="left:335px;top:170px;width:496px;height:473px;box-sizing:border-box;border:1px solid #a9a9b0;"></div>
<div class="a" style="left:837px;top:170px;width:248px;height:473px;box-sizing:border-box;border:1px solid #a9a9b0;"></div>
<div class="a" style="left:831px;top:170px;width:1px;height:473px;background:#fafafa;"></div>
<div class="a" style="left:336px;top:171px;width:494px;height:12px;background:#e4e4e4;"></div>
<div class="a t" style="top:170.60px;left:482.00px;width:200px;text-align:center;transform:scaleX(0.92);font-weight:bold;">Основные данные</div>
<div class="a" style="left:838px;top:171px;width:246px;height:12px;background:#e4e4e4;"></div>
<div class="a t" style="top:170.60px;left:900.00px;width:120px;text-align:center;transform:scaleX(0.92);font-weight:bold;">Поверка</div>
<div class="a" style="left:591px;top:189px;width:10px;height:10px;background:#fff;box-sizing:border-box;border:1px solid #333;"></div>
<svg class="a" style="left:591px;top:189px" width="10" height="10"><path d="M2 5 L4 7.5 L8 2.5" fill="none" stroke="#222" stroke-width="1.1"/></svg>
<div class="a t" style="top:187.60px;left:604px;transform-origin:0 50%;transform:scaleX(0.965);">Отображать</div>
<svg class="a" style="left:719px;top:186px" width="15" height="16" viewBox="0 0 15 16"><path d="M5.5 1.5 L10.5 6.5 L6 11 L1.5 6.5z" fill="#d8d8d8" stroke="#707070" stroke-width="0.9"/><path d="M6 3 L4.5 8" stroke="#fff" stroke-width="1"/><path d="M9.5 4 Q12.5 4.5 11.5 9.5" stroke="#1a3af0" stroke-width="1.8" fill="none"/><rect x="1" y="13" width="12" height="2.2" rx="0.6" fill="#000"/></svg>
<div class="a t" style="top:187.60px;left:735px;transform-origin:0 50%;transform:scaleX(0.9);">Особый цвет</div>
<svg class="a" style="left:817px;top:193.5px" width="5" height="3" viewBox="0 0 5 3"><path d="M0 0 L5 0 L2.5 3z" fill="#111"/></svg>
<div class="a t" style="top:206.00px;left:341px;transform-origin:0 50%;transform:scaleX(0.873);">Наименование СИ</div>
<div class="a" style="left:438px;top:205px;width:387px;height:14px;background:#fff;box-sizing:border-box;border:1px solid #b4b4b4;"></div>
<div class="a t" style="top:206.70px;left:439.8px;transform-origin:0 50%;transform:scaleX(0.92);width:401.1px;overflow:hidden;">Аализатор паров этанола</div>
<svg class="a" style="left:813px;top:205px" width="11" height="14"><path d="M1.7 5.40 L4.6 8.40 L7.5 5.40" fill="none" stroke="#333" stroke-width="1.25"/></svg>
<div class="a t" style="top:224.00px;left:341px;transform-origin:0 50%;transform:scaleX(0.92);">Тип СИ, ИО</div>
<div class="a" style="left:438px;top:223px;width:134px;height:14px;background:#fff;box-sizing:border-box;border:1px solid #b4b4b4;"></div>
<div class="a t" style="top:224.70px;left:439.8px;transform-origin:0 50%;transform:scaleX(0.92);width:126.1px;overflow:hidden;">DrivesafeII</div>
<svg class="a" style="left:560px;top:223px" width="11" height="14"><path d="M1.7 5.40 L4.6 8.40 L7.5 5.40" fill="none" stroke="#333" stroke-width="1.25"/></svg>
<div class="a t" style="top:224.00px;left:606px;transform-origin:0 50%;transform:scaleX(0.92);">Резерв 1</div>
<div class="a" style="left:691px;top:223px;width:134px;height:14px;background:#fff;box-sizing:border-box;border:1px solid #b4b4b4;"></div>
<svg class="a" style="left:813px;top:223px" width="11" height="14"><path d="M1.7 5.40 L4.6 8.40 L7.5 5.40" fill="none" stroke="#333" stroke-width="1.25"/></svg>
<div class="a t" style="top:242.00px;left:341px;transform-origin:0 50%;transform:scaleX(0.92);color:#a2a2a2;">Код СИ</div>
<div class="a" style="left:438px;top:241px;width:134px;height:14px;background:#fff;box-sizing:border-box;border:1px solid #b4b4b4;"></div>
<div class="a t" style="top:242.70px;left:439.8px;transform-origin:0 50%;transform:scaleX(0.92);color:#a2a2a2;width:126.1px;overflow:hidden;">-</div>
<svg class="a" style="left:560px;top:241px" width="11" height="14"><path d="M1.7 5.40 L4.6 8.40 L7.5 5.40" fill="none" stroke="#333" stroke-width="1.25"/></svg>
<div class="a t" style="top:242.00px;left:606px;transform-origin:0 50%;transform:scaleX(0.92);">ГосРеестр</div>
<div class="a" style="left:691px;top:241px;width:134px;height:14px;background:#fff;box-sizing:border-box;border:1px solid #b4b4b4;"></div>
<div class="a t" style="top:242.70px;left:692.8px;transform-origin:0 50%;transform:scaleX(0.92);width:126.1px;overflow:hidden;">53543-13</div>
<svg class="a" style="left:813px;top:241px" width="11" height="14"><path d="M1.7 5.40 L4.6 8.40 L7.5 5.40" fill="none" stroke="#333" stroke-width="1.25"/></svg>
<div class="a t" style="top:260.00px;left:341px;transform-origin:0 50%;transform:scaleX(0.92);">Категория СИ</div>
<div class="a" style="left:438px;top:259px;width:31px;height:14px;background:#fff;box-sizing:border-box;border:1px solid #b4b4b4;"></div>
<div class="a t" style="top:260.70px;left:439.8px;transform-origin:0 50%;transform:scaleX(0.92);width:14.1px;overflow:hidden;">4</div>
<svg class="a" style="left:457px;top:259px" width="11" height="14"><path d="M1.7 5.40 L4.6 8.40 L7.5 5.40" fill="none" stroke="#333" stroke-width="1.25"/></svg>
<div class="a" style="left:474px;top:259px;width:351px;height:14px;background:#fff;box-sizing:border-box;border:1px solid #b4b4b4;"></div>
<div class="a t" style="top:260.70px;left:475.8px;transform-origin:0 50%;transform:scaleX(0.92);width:362.0px;overflow:hidden;">СИ, подлежащие обязательной гос. поверке</div>
<svg class="a" style="left:813px;top:259px" width="11" height="14"><path d="M1.7 5.40 L4.6 8.40 L7.5 5.40" fill="none" stroke="#333" stroke-width="1.25"/></svg>
<div class="a t" style="top:278.00px;left:341px;transform-origin:0 50%;transform:scaleX(0.92);">Вид измерения</div>
<div class="a" style="left:438px;top:277px;width:31px;height:14px;background:#fff;box-sizing:border-box;border:1px solid #b4b4b4;"></div>
<div class="a t" style="top:278.70px;left:439.8px;transform-origin:0 50%;transform:scaleX(0.92);width:14.1px;overflow:hidden;">5</div>
<svg class="a" style="left:457px;top:277px" width="11" height="14"><path d="M1.7 5.40 L4.6 8.40 L7.5 5.40" fill="none" stroke="#333" stroke-width="1.25"/></svg>
<div class="a" style="left:474px;top:277px;width:351px;height:14px;background:#fff;box-sizing:border-box;border:1px solid #b4b4b4;"></div>
<div class="a t" style="top:278.70px;left:475.8px;transform-origin:0 50%;transform:scaleX(0.92);width:362.0px;overflow:hidden;">Измерения физико-химического состава и свойств веществ</div>
<svg class="a" style="left:813px;top:277px" width="11" height="14"><path d="M1.7 5.40 L4.6 8.40 L7.5 5.40" fill="none" stroke="#333" stroke-width="1.25"/></svg>
<div class="a t" style="top:296.00px;left:341px;transform-origin:0 50%;transform:scaleX(0.92);">Сфера применения</div>
<div class="a" style="left:438px;top:295px;width:31px;height:14px;background:#fff;box-sizing:border-box;border:1px solid #b4b4b4;"></div>
<div class="a t" style="top:296.70px;left:439.8px;transform-origin:0 50%;transform:scaleX(0.92);width:14.1px;overflow:hidden;">5</div>
<svg class="a" style="left:457px;top:295px" width="11" height="14"><path d="M1.7 5.40 L4.6 8.40 L7.5 5.40" fill="none" stroke="#333" stroke-width="1.25"/></svg>
<div class="a" style="left:474px;top:295px;width:351px;height:14px;background:#fff;box-sizing:border-box;border:1px solid #b4b4b4;"></div>
<div class="a t" style="top:296.70px;left:475.8px;transform-origin:0 50%;transform:scaleX(0.92);width:362.0px;overflow:hidden;">Выполнение работ по обеспечению безопасных условий и охраны труда</div>
<svg class="a" style="left:813px;top:295px" width="11" height="14"><path d="M1.7 5.40 L4.6 8.40 L7.5 5.40" fill="none" stroke="#333" stroke-width="1.25"/></svg>
<div class="a t" style="top:314.00px;left:341px;transform-origin:0 50%;transform:scaleX(0.92);">Место нахождения</div>
<div class="a" style="left:438px;top:313px;width:387px;height:14px;background:#fff;box-sizing:border-box;border:1px solid #b4b4b4;"></div>
<div class="a t" style="top:314.70px;left:439.8px;transform-origin:0 50%;transform:scaleX(0.92);width:401.1px;overflow:hidden;">ТЦ</div>
<svg class="a" style="left:813px;top:313px" width="11" height="14"><path d="M1.7 5.40 L4.6 8.40 L7.5 5.40" fill="none" stroke="#333" stroke-width="1.25"/></svg>
<div class="a t" style="top:332.00px;left:341px;transform-origin:0 50%;transform:scaleX(0.92);">Ответственный</div>
<div class="a" style="left:438px;top:331px;width:387px;height:14px;background:#fff;box-sizing:border-box;border:1px solid #b4b4b4;"></div>
<div class="a t" style="top:332.70px;left:439.8px;transform-origin:0 50%;transform:scaleX(0.92);width:401.1px;overflow:hidden;">Полханов А.В.</div>
<svg class="a" style="left:813px;top:331px" width="11" height="14"><path d="M1.7 5.40 L4.6 8.40 L7.5 5.40" fill="none" stroke="#333" stroke-width="1.25"/></svg>
<div class="a t" style="top:350.00px;left:341px;transform-origin:0 50%;transform:scaleX(0.92);">Состояние СИ</div>
<div class="a" style="left:438px;top:349px;width:387px;height:14px;background:#fff;box-sizing:border-box;border:1px solid #b4b4b4;"></div>
<div class="a t" style="top:350.70px;left:439.8px;transform-origin:0 50%;transform:scaleX(0.92);width:401.1px;overflow:hidden;">в эксплуатации</div>
<svg class="a" style="left:813px;top:349px" width="11" height="14"><path d="M1.7 5.40 L4.6 8.40 L7.5 5.40" fill="none" stroke="#333" stroke-width="1.25"/></svg>
<div class="a t" style="top:369.00px;left:341px;transform-origin:0 50%;transform:scaleX(0.92);">Примечание</div>
<div class="a" style="left:438px;top:368px;width:387px;height:47px;background:#fff;box-sizing:border-box;border:1px solid #b4b4b4;"></div>
<div class="a t" style="top:369.10px;left:439.5px;transform-origin:0 50%;transform:scaleX(0.92);">мед. пункт</div>
<div class="a" style="left:336px;top:416px;width:494px;height:1px;background:#b0b0b8;"></div>
<div class="a" style="left:336px;top:417px;width:494px;height:13px;background:#e4e4e4;"></div>
<div class="a t" style="top:417.10px;left:482.00px;width:200px;text-align:center;transform:scaleX(0.92);font-weight:bold;">Паспортные данные</div>
<div class="a t" style="top:434.00px;left:341px;transform-origin:0 50%;transform:scaleX(0.92);">Заводской №</div>
<div class="a" style="left:438px;top:433px;width:134px;height:14px;background:#fff;box-sizing:border-box;border:1px solid #b4b4b4;"></div>
<div class="a t" style="top:434.70px;left:438.00px;width:133px;text-align:center;transform:scaleX(0.92);">DS039485B765</div>
<div class="a t" style="top:434.00px;left:606px;transform-origin:0 50%;transform:scaleX(0.92);color:#a2a2a2;">Паспорт №</div>
<div class="a" style="left:691px;top:433px;width:134px;height:14px;background:#fff;box-sizing:border-box;border:1px solid #b4b4b4;"></div>
<div class="a t" style="top:434.70px;left:691.00px;width:133px;text-align:center;transform:scaleX(0.92);color:#a2a2a2;">-</div>
<div class="a t" style="top:452.00px;left:341px;transform-origin:0 50%;transform:scaleX(0.92);">Инвентарный №</div>
<div class="a" style="left:438px;top:451px;width:134px;height:14px;background:#fff;box-sizing:border-box;border:1px solid #b4b4b4;"></div>
<div class="a t" style="top:452.70px;left:438.00px;width:133px;text-align:center;transform:scaleX(0.92);">108756</div>
<div class="a t" style="top:452.00px;left:606px;transform-origin:0 50%;transform:scaleX(0.92);color:#a2a2a2;">Номенклатурный №</div>
<div class="a" style="left:691px;top:451px;width:134px;height:14px;background:#fff;box-sizing:border-box;border:1px solid #b4b4b4;"></div>
<div class="a t" style="top:452.70px;left:691.00px;width:133px;text-align:center;transform:scaleX(0.92);color:#a2a2a2;">-</div>
<div class="a t" style="top:470.00px;left:341px;transform-origin:0 50%;transform:scaleX(0.92);color:#a2a2a2;">Изготовитель</div>
<div class="a" style="left:438px;top:469px;width:387px;height:14px;background:#fff;box-sizing:border-box;border:1px solid #b4b4b4;"></div>
<div class="a t" style="top:470.70px;left:439.8px;transform-origin:0 50%;transform:scaleX(0.92);color:#a2a2a2;width:401.1px;overflow:hidden;">-</div>
<svg class="a" style="left:813px;top:469px" width="11" height="14"><path d="M1.7 5.40 L4.6 8.40 L7.5 5.40" fill="none" stroke="#333" stroke-width="1.25"/></svg>
<div class="a t" style="top:488.00px;left:341px;transform-origin:0 50%;transform:scaleX(0.92);color:#a2a2a2;">Штрих-код</div>
<div class="a" style="left:438px;top:487px;width:134px;height:14px;background:#fff;box-sizing:border-box;border:1px solid #b4b4b4;"></div>
<div class="a t" style="top:488.70px;left:438.00px;width:133px;text-align:center;transform:scaleX(0.92);color:#a2a2a2;">-</div>
<div class="a t" style="top:506.00px;left:341px;transform-origin:0 50%;transform:scaleX(0.92);color:#a2a2a2;">Начальная стоимость</div>
<div class="a" style="left:438px;top:505px;width:67px;height:14px;background:#fff;box-sizing:border-box;border:1px solid #b4b4b4;"></div>
<div class="a" style="left:492px;top:506px;width:12px;height:12px;background:#e2e2e2;"></div>
<div class="a" style="left:492px;top:506px;width:1px;height:12px;background:#cfcfcf;"></div>
<div class="a t" style="top:506.10px;left:435.00px;width:54px;text-align:right;transform-origin:100% 50%;transform:scaleX(0.92);color:#a2a2a2;">1,00</div>
<div class="a t" style="top:506.00px;left:606px;transform-origin:0 50%;transform:scaleX(0.955);">Дата ввода в эксплуатацию</div>
<div class="a" style="left:758px;top:505px;width:67px;height:14px;background:#fff;box-sizing:border-box;border:1px solid #b4b4b4;"></div>
<div class="a" style="left:812px;top:506px;width:12px;height:12px;background:#e2e2e2;"></div>
<div class="a" style="left:812px;top:506px;width:1px;height:12px;background:#cfcfcf;"></div>
<div class="a t" style="top:506.10px;left:758.00px;width:54px;text-align:center;transform:scaleX(0.92);">14.08.2020</div>
<div class="a t" style="top:524.00px;left:341px;transform-origin:0 50%;transform:scaleX(0.92);">Дата изготовления</div>
<div class="a" style="left:438px;top:523px;width:67px;height:14px;background:#fff;box-sizing:border-box;border:1px solid #b4b4b4;"></div>
<div class="a" style="left:492px;top:524px;width:12px;height:12px;background:#e2e2e2;"></div>
<div class="a" style="left:492px;top:524px;width:1px;height:12px;background:#cfcfcf;"></div>
<div class="a t" style="top:524.10px;left:438.00px;width:54px;text-align:center;transform:scaleX(0.92);">14.08.2020</div>
<div class="a t" style="top:524.00px;left:606px;transform-origin:0 50%;transform:scaleX(0.92);">Дата замены на новый</div>
<div class="a" style="left:758px;top:523px;width:67px;height:14px;background:#fff;box-sizing:border-box;border:1px solid #b4b4b4;"></div>
<div class="a" style="left:812px;top:524px;width:12px;height:12px;background:#e2e2e2;"></div>
<div class="a" style="left:812px;top:524px;width:1px;height:12px;background:#cfcfcf;"></div>
<div class="a t" style="top:524.10px;left:758.00px;width:54px;text-align:center;transform:scaleX(0.92);">01.01.2060</div>
<svg class="a" style="left:640px;top:544px" width="13" height="13" viewBox="0 0 13 13"><defs><linearGradient id="pg" x1="0" y1="0" x2="0" y2="1"><stop offset="0" stop-color="#d8ecd8"/><stop offset="0.45" stop-color="#40c040"/><stop offset="1" stop-color="#10e010"/></linearGradient></defs><path d="M4.3 0.5h4v4.3h4v3.8h-4v4h-4v-4h-4v-3.8h4z" fill="url(#pg)" stroke="#3a8a3a" stroke-width="0.7"/></svg>
<svg class="a" style="left:658px;top:545px" width="13" height="12" viewBox="0 0 13 12"><defs><linearGradient id="rg" x1="0" y1="0" x2="1" y2="0"><stop offset="0" stop-color="#1a48c8"/><stop offset="1" stop-color="#38b8f0"/></linearGradient></defs><path d="M0.3 7.5 C1.8 2.5 6 0.8 10.3 2.3 L11.8 1.2 L11.6 5.6 L7.8 5.2 L9.3 4 C6.3 3 3.3 4.3 0.3 7.5 Z" fill="url(#rg)"/><path d="M12.6 4.2 C11.2 9 7 10.8 2.7 9.4 L1.3 10.6 L1.4 6.2 L5.2 6.6 L3.8 7.8 C6.8 8.8 9.7 7.4 12.6 4.2 Z" fill="url(#rg)"/></svg>
<svg class="a" style="left:675px;top:548px" width="14" height="6" viewBox="0 0 14 6"><defs><linearGradient id="mg" x1="0" y1="0" x2="0" y2="1"><stop offset="0" stop-color="#e8a0a0"/><stop offset="0.5" stop-color="#e02a2a"/><stop offset="1" stop-color="#e81010"/></linearGradient></defs><rect x="0.6" y="0.6" width="12.5" height="4.4" rx="2.2" fill="url(#mg)" stroke="#c02020" stroke-width="0.6"/></svg>
<svg class="a" style="left:765px;top:544px" width="13" height="13" viewBox="0 0 13 13"><defs><linearGradient id="pg" x1="0" y1="0" x2="0" y2="1"><stop offset="0" stop-color="#d8ecd8"/><stop offset="0.45" stop-color="#40c040"/><stop offset="1" stop-color="#10e010"/></linearGradient></defs><path d="M4.3 0.5h4v4.3h4v3.8h-4v4h-4v-4h-4v-3.8h4z" fill="url(#pg)" stroke="#3a8a3a" stroke-width="0.7"/></svg>
<svg class="a" style="left:783px;top:545px" width="13" height="12" viewBox="0 0 13 12"><defs><linearGradient id="rg" x1="0" y1="0" x2="1" y2="0"><stop offset="0" stop-color="#1a48c8"/><stop offset="1" stop-color="#38b8f0"/></linearGradient></defs><path d="M0.3 7.5 C1.8 2.5 6 0.8 10.3 2.3 L11.8 1.2 L11.6 5.6 L7.8 5.2 L9.3 4 C6.3 3 3.3 4.3 0.3 7.5 Z" fill="url(#rg)"/><path d="M12.6 4.2 C11.2 9 7 10.8 2.7 9.4 L1.3 10.6 L1.4 6.2 L5.2 6.6 L3.8 7.8 C6.8 8.8 9.7 7.4 12.6 4.2 Z" fill="url(#rg)"/></svg>
<svg class="a" style="left:800px;top:548px" width="14" height="6" viewBox="0 0 14 6"><defs><linearGradient id="mg" x1="0" y1="0" x2="0" y2="1"><stop offset="0" stop-color="#e8a0a0"/><stop offset="0.5" stop-color="#e02a2a"/><stop offset="1" stop-color="#e81010"/></linearGradient></defs><rect x="0.6" y="0.6" width="12.5" height="4.4" rx="2.2" fill="url(#mg)" stroke="#c02020" stroke-width="0.6"/></svg>
<div class="a" style="left:354px;top:561px;width:120px;height:14px;background:#fff;box-sizing:border-box;border:1px solid #b4b4b4;"></div>
<div class="a t" style="top:562.70px;left:355.8px;transform-origin:0 50%;transform:scaleX(0.92);width:110.9px;overflow:hidden;">Выдыхаемый воздух</div>
<svg class="a" style="left:462px;top:561px" width="11" height="14"><path d="M1.7 5.40 L4.6 8.40 L7.5 5.40" fill="none" stroke="#333" stroke-width="1.25"/></svg>
<div class="a" style="left:475px;top:561px;width:53px;height:14px;background:#fff;box-sizing:border-box;border:1px solid #b4b4b4;"></div>
<div class="a t" style="top:562.70px;left:476.8px;transform-origin:0 50%;transform:scaleX(0.92);width:38.0px;overflow:hidden;">0</div>
<svg class="a" style="left:516px;top:561px" width="11" height="14"><path d="M1.7 5.40 L4.6 8.40 L7.5 5.40" fill="none" stroke="#333" stroke-width="1.25"/></svg>
<div class="a" style="left:529px;top:561px;width:53px;height:14px;background:#fff;box-sizing:border-box;border:1px solid #b4b4b4;"></div>
<div class="a t" style="top:562.70px;left:530.8px;transform-origin:0 50%;transform:scaleX(0.92);width:38.0px;overflow:hidden;">2,5</div>
<svg class="a" style="left:570px;top:561px" width="11" height="14"><path d="M1.7 5.40 L4.6 8.40 L7.5 5.40" fill="none" stroke="#333" stroke-width="1.25"/></svg>
<div class="a" style="left:583px;top:561px;width:54px;height:14px;background:#fff;box-sizing:border-box;border:1px solid #b4b4b4;"></div>
<div class="a t" style="top:562.70px;left:584.8px;transform-origin:0 50%;transform:scaleX(0.92);width:39.1px;overflow:hidden;">мг/л</div>
<svg class="a" style="left:625px;top:561px" width="11" height="14"><path d="M1.7 5.40 L4.6 8.40 L7.5 5.40" fill="none" stroke="#333" stroke-width="1.25"/></svg>
<div class="a" style="left:638px;top:561px;width:54px;height:14px;background:#fff;box-sizing:border-box;border:1px solid #b4b4b4;"></div>
<div class="a t" style="top:562.70px;left:639.8px;transform-origin:0 50%;transform:scaleX(0.92);width:39.1px;overflow:hidden;">±0,5</div>
<svg class="a" style="left:680px;top:561px" width="11" height="14"><path d="M1.7 5.40 L4.6 8.40 L7.5 5.40" fill="none" stroke="#333" stroke-width="1.25"/></svg>
<div class="a" style="left:708px;top:561px;width:54px;height:14px;background:#fff;box-sizing:border-box;border:1px solid #b4b4b4;"></div>
<svg class="a" style="left:750px;top:561px" width="11" height="14"><path d="M1.7 5.40 L4.6 8.40 L7.5 5.40" fill="none" stroke="#333" stroke-width="1.25"/></svg>
<div class="a" style="left:763px;top:561px;width:54px;height:14px;background:#fff;box-sizing:border-box;border:1px solid #b4b4b4;"></div>
<svg class="a" style="left:805px;top:561px" width="11" height="14"><path d="M1.7 5.40 L4.6 8.40 L7.5 5.40" fill="none" stroke="#333" stroke-width="1.25"/></svg>
<div class="a" style="left:338px;top:578px;width:368px;height:64px;background:#fff;box-sizing:border-box;border:1px solid #a9a9a9;"></div>
<div class="a" style="left:339px;top:579px;width:366px;height:14px;background:#e9e9e9;"></div>
<div class="a" style="left:339px;top:593px;width:366px;height:1px;background:#d4d4d4;"></div>
<div class="a" style="left:357px;top:579px;width:1px;height:14px;background:#c6c6c6;"></div>
<div class="a" style="left:357px;top:594px;width:1px;height:46px;background:#efefef;"></div>
<div class="a" style="left:474px;top:579px;width:1px;height:14px;background:#c6c6c6;"></div>
<div class="a" style="left:474px;top:594px;width:1px;height:46px;background:#efefef;"></div>
<div class="a" style="left:528px;top:579px;width:1px;height:14px;background:#c6c6c6;"></div>
<div class="a" style="left:528px;top:594px;width:1px;height:46px;background:#efefef;"></div>
<div class="a" style="left:582px;top:579px;width:1px;height:14px;background:#c6c6c6;"></div>
<div class="a" style="left:582px;top:594px;width:1px;height:46px;background:#efefef;"></div>
<div class="a" style="left:637px;top:579px;width:1px;height:14px;background:#c6c6c6;"></div>
<div class="a" style="left:637px;top:594px;width:1px;height:46px;background:#efefef;"></div>
<div class="a" style="left:691px;top:579px;width:1px;height:14px;background:#c6c6c6;"></div>
<div class="a" style="left:691px;top:594px;width:1px;height:46px;background:#efefef;"></div>
<div class="a" style="left:339px;top:604px;width:366px;height:1px;background:#efefef;"></div>
<div class="a" style="left:339px;top:614px;width:366px;height:1px;background:#efefef;"></div>
<div class="a" style="left:339px;top:625px;width:366px;height:1px;background:#efefef;"></div>
<div class="a" style="left:339px;top:636px;width:366px;height:1px;background:#efefef;"></div>
<div class="a t" style="top:580.10px;left:341px;transform-origin:0 50%;transform:scaleX(0.92);">№</div>
<div class="a t" style="top:580.10px;left:361px;transform-origin:0 50%;transform:scaleX(0.92);">Наименование параметра</div>
<div class="a t" style="top:580.10px;left:478px;transform-origin:0 50%;transform:scaleX(0.92);">Нижний п...</div>
<div class="a t" style="top:580.10px;left:532px;transform-origin:0 50%;transform:scaleX(0.92);">Верхний ...</div>
<div class="a t" style="top:580.10px;left:593px;transform-origin:0 50%;transform:scaleX(0.92);">Ед. изм.</div>
<div class="a t" style="top:580.10px;left:641px;transform-origin:0 50%;transform:scaleX(0.92);">Класс точ...</div>
<div class="a" style="left:340px;top:594px;width:351px;height:10px;background:#3263b6;"></div>
<div class="a" style="left:357px;top:594px;width:1px;height:10px;background:#fff;"></div>
<div class="a" style="left:474px;top:594px;width:1px;height:10px;background:#fff;"></div>
<div class="a" style="left:528px;top:594px;width:1px;height:10px;background:#fff;"></div>
<div class="a" style="left:582px;top:594px;width:1px;height:10px;background:#fff;"></div>
<div class="a" style="left:637px;top:594px;width:1px;height:10px;background:#fff;"></div>
<div class="a t" style="top:594.10px;left:341px;transform-origin:0 50%;transform:scaleX(0.92);color:#fff;">1</div>
<div class="a t" style="top:594.10px;left:361px;transform-origin:0 50%;transform:scaleX(0.92);color:#fff;">Выдыхаемый воздух</div>
<div class="a t" style="top:594.10px;left:476.00px;width:50px;text-align:center;transform:scaleX(0.92);color:#fff;">0</div>
<div class="a t" style="top:594.10px;left:530.00px;width:50px;text-align:center;transform:scaleX(0.92);color:#fff;">2.5</div>
<div class="a t" style="top:594.10px;left:585.00px;width:50px;text-align:center;transform:scaleX(0.92);color:#fff;">мг/л</div>
<div class="a t" style="top:594.10px;left:639.00px;width:50px;text-align:center;transform:scaleX(0.92);color:#fff;">±0,5</div>
<div class="a" style="left:707px;top:578px;width:122px;height:64px;background:#fff;box-sizing:border-box;border:1px solid #a9a9a9;"></div>
<div class="a" style="left:708px;top:579px;width:120px;height:14px;background:#e9e9e9;"></div>
<div class="a" style="left:708px;top:593px;width:120px;height:1px;background:#d4d4d4;"></div>
<div class="a" style="left:762px;top:579px;width:1px;height:14px;background:#c6c6c6;"></div>
<div class="a" style="left:762px;top:594px;width:1px;height:46px;background:#efefef;"></div>
<div class="a" style="left:815px;top:579px;width:1px;height:14px;background:#c6c6c6;"></div>
<div class="a" style="left:815px;top:594px;width:1px;height:46px;background:#efefef;"></div>
<div class="a" style="left:708px;top:604px;width:120px;height:1px;background:#efefef;"></div>
<div class="a" style="left:708px;top:614px;width:120px;height:1px;background:#efefef;"></div>
<div class="a" style="left:708px;top:625px;width:120px;height:1px;background:#efefef;"></div>
<div class="a" style="left:708px;top:636px;width:120px;height:1px;background:#efefef;"></div>
<div class="a t" style="top:580.10px;left:711px;transform-origin:0 50%;transform:scaleX(0.92);">Металл</div>
<div class="a t" style="top:580.10px;left:767px;transform-origin:0 50%;transform:scaleX(0.92);">Вес, грамм</div>
<div class="a t" style="top:187.50px;left:843px;transform-origin:0 50%;transform:scaleX(0.92);">Дата последней поверки</div>
<div class="a" style="left:1011px;top:187px;width:68px;height:14px;background:#fff;box-sizing:border-box;border:1px solid #b4b4b4;"></div>
<div class="a" style="left:1066px;top:188px;width:12px;height:12px;background:#e2e2e2;"></div>
<div class="a" style="left:1066px;top:188px;width:1px;height:12px;background:#cfcfcf;"></div>
<div class="a t" style="top:188.10px;left:1011.00px;width:55px;text-align:center;transform:scaleX(0.92);">25.03.2020</div>
<div class="a t" style="top:206.00px;left:843px;transform-origin:0 50%;transform:scaleX(0.92);">Период поверки, месяц</div>
<div class="a" style="left:1011px;top:205px;width:68px;height:14px;background:#fff;box-sizing:border-box;border:1px solid #b4b4b4;"></div>
<div class="a t" style="top:206.70px;left:1012.8px;transform-origin:0 50%;transform:scaleX(0.92);width:54.3px;overflow:hidden;">12</div>
<svg class="a" style="left:1067px;top:205px" width="11" height="14"><path d="M1.7 5.40 L4.6 8.40 L7.5 5.40" fill="none" stroke="#333" stroke-width="1.25"/></svg>
<div class="a t" style="top:224.00px;left:843px;transform-origin:0 50%;transform:scaleX(0.92);">Дата очередной поверки</div>
<div class="a" style="left:1011px;top:223px;width:68px;height:14px;background:#e3e3e3;"></div>
<div class="a t" style="top:224.10px;left:1010.50px;width:68px;text-align:center;transform:scaleX(0.92);">25.03.2021</div>
<div class="a t" style="top:242.00px;left:843px;transform-origin:0 50%;transform:scaleX(0.92);">До поверки осталось, день</div>
<div class="a" style="left:1011px;top:241px;width:68px;height:14px;background:#e3e3e3;"></div>
<div class="a t" style="top:242.10px;left:1010.50px;width:68px;text-align:center;transform:scaleX(0.92);">57</div>
<div class="a t" style="top:260.00px;left:843px;transform-origin:0 50%;transform:scaleX(0.92);">Стоимость поверки</div>
<div class="a" style="left:1011px;top:259px;width:68px;height:14px;background:#fff;box-sizing:border-box;border:1px solid #b4b4b4;"></div>
<div class="a" style="left:1066px;top:260px;width:12px;height:12px;background:#e2e2e2;"></div>
<div class="a" style="left:1066px;top:260px;width:1px;height:12px;background:#cfcfcf;"></div>
<div class="a t" style="top:260.10px;left:1008.00px;width:55px;text-align:right;transform-origin:100% 50%;transform:scaleX(0.92);">1735,12</div>
<div class="a t" style="top:278.00px;left:843px;transform-origin:0 50%;transform:scaleX(0.92);">Место поверки</div>
<div class="a" style="left:921px;top:277px;width:158px;height:14px;background:#fff;box-sizing:border-box;border:1px solid #b4b4b4;"></div>
<div class="a t" style="top:278.70px;left:922.8px;transform-origin:0 50%;transform:scaleX(0.92);width:152.2px;overflow:hidden;">Нижегородский ЦСМ</div>
<svg class="a" style="left:1067px;top:277px" width="11" height="14"><path d="M1.7 5.40 L4.6 8.40 L7.5 5.40" fill="none" stroke="#333" stroke-width="1.25"/></svg>
<div class="a t" style="top:296.00px;left:843px;transform-origin:0 50%;transform:scaleX(0.92);color:#a2a2a2;">Код поверочного подразделения</div>
<div class="a" style="left:1005px;top:295px;width:74px;height:14px;background:#fff;box-sizing:border-box;border:1px solid #b4b4b4;"></div>
<svg class="a" style="left:1067px;top:295px" width="11" height="14"><path d="M1.7 5.40 L4.6 8.40 L7.5 5.40" fill="none" stroke="#333" stroke-width="1.25"/></svg>
<div class="a t" style="top:314.00px;left:843px;transform-origin:0 50%;transform:scaleX(0.92);">Вид поверки</div>
<div class="a" style="left:921px;top:313px;width:158px;height:14px;background:#fff;box-sizing:border-box;border:1px solid #b4b4b4;"></div>
<div class="a t" style="top:314.70px;left:922.8px;transform-origin:0 50%;transform:scaleX(0.92);width:152.2px;overflow:hidden;">периодическая</div>
<svg class="a" style="left:1067px;top:313px" width="11" height="14"><path d="M1.7 5.40 L4.6 8.40 L7.5 5.40" fill="none" stroke="#333" stroke-width="1.25"/></svg>
<div class="a t" style="top:332.00px;left:843px;transform-origin:0 50%;transform:scaleX(0.92);color:#a2a2a2;">Методика поверки</div>
<div class="a" style="left:921px;top:331px;width:158px;height:14px;background:#fff;box-sizing:border-box;border:1px solid #b4b4b4;"></div>
<div class="a t" style="top:332.70px;left:922.8px;transform-origin:0 50%;transform:scaleX(0.92);color:#a2a2a2;width:152.2px;overflow:hidden;">-</div>
<svg class="a" style="left:1067px;top:331px" width="11" height="14"><path d="M1.7 5.40 L4.6 8.40 L7.5 5.40" fill="none" stroke="#333" stroke-width="1.25"/></svg>
<div class="a t" style="top:350.00px;left:843px;transform-origin:0 50%;transform:scaleX(0.92);color:#a2a2a2;">ФИО поверителя</div>
<div class="a" style="left:921px;top:349px;width:158px;height:14px;background:#fff;box-sizing:border-box;border:1px solid #b4b4b4;"></div>
<div class="a t" style="top:350.70px;left:922.8px;transform-origin:0 50%;transform:scaleX(0.92);color:#a2a2a2;width:152.2px;overflow:hidden;">-</div>
<svg class="a" style="left:1067px;top:349px" width="11" height="14"><path d="M1.7 5.40 L4.6 8.40 L7.5 5.40" fill="none" stroke="#333" stroke-width="1.25"/></svg>
<div class="a t" style="top:369.00px;left:843px;transform-origin:0 50%;transform:scaleX(0.92);">Заключение</div>
<div class="a" style="left:921px;top:368px;width:158px;height:14px;background:#fff;box-sizing:border-box;border:1px solid #b4b4b4;"></div>
<div class="a t" style="top:369.70px;left:922.8px;transform-origin:0 50%;transform:scaleX(0.92);width:152.2px;overflow:hidden;">годен</div>
<svg class="a" style="left:1067px;top:368px" width="11" height="14"><path d="M1.7 5.40 L4.6 8.40 L7.5 5.40" fill="none" stroke="#333" stroke-width="1.25"/></svg>
<div class="a t" style="top:387.00px;left:843px;transform-origin:0 50%;transform:scaleX(0.92);">№ протокола (св-ва, извещ. о неприг.)</div>
<div class="a" style="left:1011px;top:386px;width:68px;height:14px;background:#fff;box-sizing:border-box;border:1px solid #b4b4b4;"></div>
<div class="a t" style="top:387.70px;left:1011.00px;width:67px;text-align:center;transform:scaleX(0.92);">3101/20/0621</div>
<div class="a t" style="top:405.00px;left:843px;transform-origin:0 50%;transform:scaleX(0.92);color:#a2a2a2;">Вид клейма</div>
<div class="a" style="left:921px;top:404px;width:158px;height:14px;background:#fff;box-sizing:border-box;border:1px solid #b4b4b4;"></div>
<div class="a t" style="top:405.70px;left:922.8px;transform-origin:0 50%;transform:scaleX(0.92);color:#a2a2a2;width:152.2px;overflow:hidden;">-</div>
<svg class="a" style="left:1067px;top:404px" width="11" height="14"><path d="M1.7 5.40 L4.6 8.40 L7.5 5.40" fill="none" stroke="#333" stroke-width="1.25"/></svg>
<div class="a t" style="top:423.00px;left:843px;transform-origin:0 50%;transform:scaleX(0.92);">Клеймо №</div>
<div class="a" style="left:921px;top:422px;width:158px;height:14px;background:#fff;box-sizing:border-box;border:1px solid #b4b4b4;"></div>
<div class="a t" style="top:441.00px;left:843px;transform-origin:0 50%;transform:scaleX(0.92);">Резерв 2</div>
<div class="a" style="left:921px;top:440px;width:158px;height:14px;background:#fff;box-sizing:border-box;border:1px solid #b4b4b4;"></div>
<svg class="a" style="left:1067px;top:440px" width="11" height="14"><path d="M1.7 5.40 L4.6 8.40 L7.5 5.40" fill="none" stroke="#333" stroke-width="1.25"/></svg>
<div class="a" style="left:838px;top:457px;width:246px;height:1px;background:#b0b0b8;"></div>
<div class="a" style="left:838px;top:458px;width:246px;height:13px;background:#e4e4e4;"></div>
<div class="a t" style="top:458.10px;left:900.00px;width:120px;text-align:center;transform:scaleX(0.92);font-weight:bold;">Ремонт</div>
<div class="a t" style="top:475.00px;left:843px;transform-origin:0 50%;transform:scaleX(0.92);">Причина ремонта</div>
<div class="a" style="left:921px;top:474px;width:158px;height:14px;background:#fff;box-sizing:border-box;border:1px solid #b4b4b4;"></div>
<svg class="a" style="left:1067px;top:474px" width="11" height="14"><path d="M1.7 5.40 L4.6 8.40 L7.5 5.40" fill="none" stroke="#333" stroke-width="1.25"/></svg>
<div class="a t" style="top:493.00px;left:843px;transform-origin:0 50%;transform:scaleX(0.92);">Дата ремонта</div>
<div class="a" style="left:1011px;top:492px;width:68px;height:14px;background:#fff;box-sizing:border-box;border:1px solid #b4b4b4;"></div>
<div class="a" style="left:1066px;top:493px;width:12px;height:12px;background:#e2e2e2;"></div>
<div class="a" style="left:1066px;top:493px;width:1px;height:12px;background:#cfcfcf;"></div>
<div class="a" style="left:1031.2px;top:501px;width:1.2px;height:1.2px;background:#606060"></div>
<div class="a" style="left:1038.8px;top:501px;width:1.2px;height:1.2px;background:#606060"></div>
<div class="a t" style="top:511.00px;left:843px;transform-origin:0 50%;transform:scaleX(0.92);">Место ремонта</div>
<div class="a" style="left:921px;top:510px;width:158px;height:14px;background:#fff;box-sizing:border-box;border:1px solid #b4b4b4;"></div>
<svg class="a" style="left:1067px;top:510px" width="11" height="14"><path d="M1.7 5.40 L4.6 8.40 L7.5 5.40" fill="none" stroke="#333" stroke-width="1.25"/></svg>
<div class="a t" style="top:529.00px;left:843px;transform-origin:0 50%;transform:scaleX(0.92);">Стоимость ремонта</div>
<div class="a" style="left:1011px;top:528px;width:68px;height:14px;background:#fff;box-sizing:border-box;border:1px solid #b4b4b4;"></div>
<div class="a" style="left:1066px;top:529px;width:12px;height:12px;background:#e2e2e2;"></div>
<div class="a" style="left:1066px;top:529px;width:1px;height:12px;background:#cfcfcf;"></div>
<div class="a t" style="top:529.10px;left:1008.00px;width:55px;text-align:right;transform-origin:100% 50%;transform:scaleX(0.92);">0,00</div>
<div class="a t" style="top:547.00px;left:843px;transform-origin:0 50%;transform:scaleX(0.92);">Краткое описание ремонта</div>
<div class="a" style="left:842px;top:562px;width:237px;height:74px;background:#fff;box-sizing:border-box;border:1px solid #b4b4b4;"></div>
<div class="a" style="left:923px;top:650px;width:62px;height:18px;background:#e1e1e1;box-sizing:border-box;border:1px solid #adadad;"></div>
<div class="a t" style="top:653.10px;left:923.50px;width:60px;text-align:center;transform:scaleX(0.92);">Применить</div>
<div class="a" style="left:1006px;top:650px;width:63px;height:18px;background:#e1e1e1;box-sizing:border-box;border:1px solid #adadad;"></div>
<div class="a t" style="top:653.10px;left:1007.00px;width:60px;text-align:center;transform:scaleX(0.92);">Отмена</div>
</body></html>
